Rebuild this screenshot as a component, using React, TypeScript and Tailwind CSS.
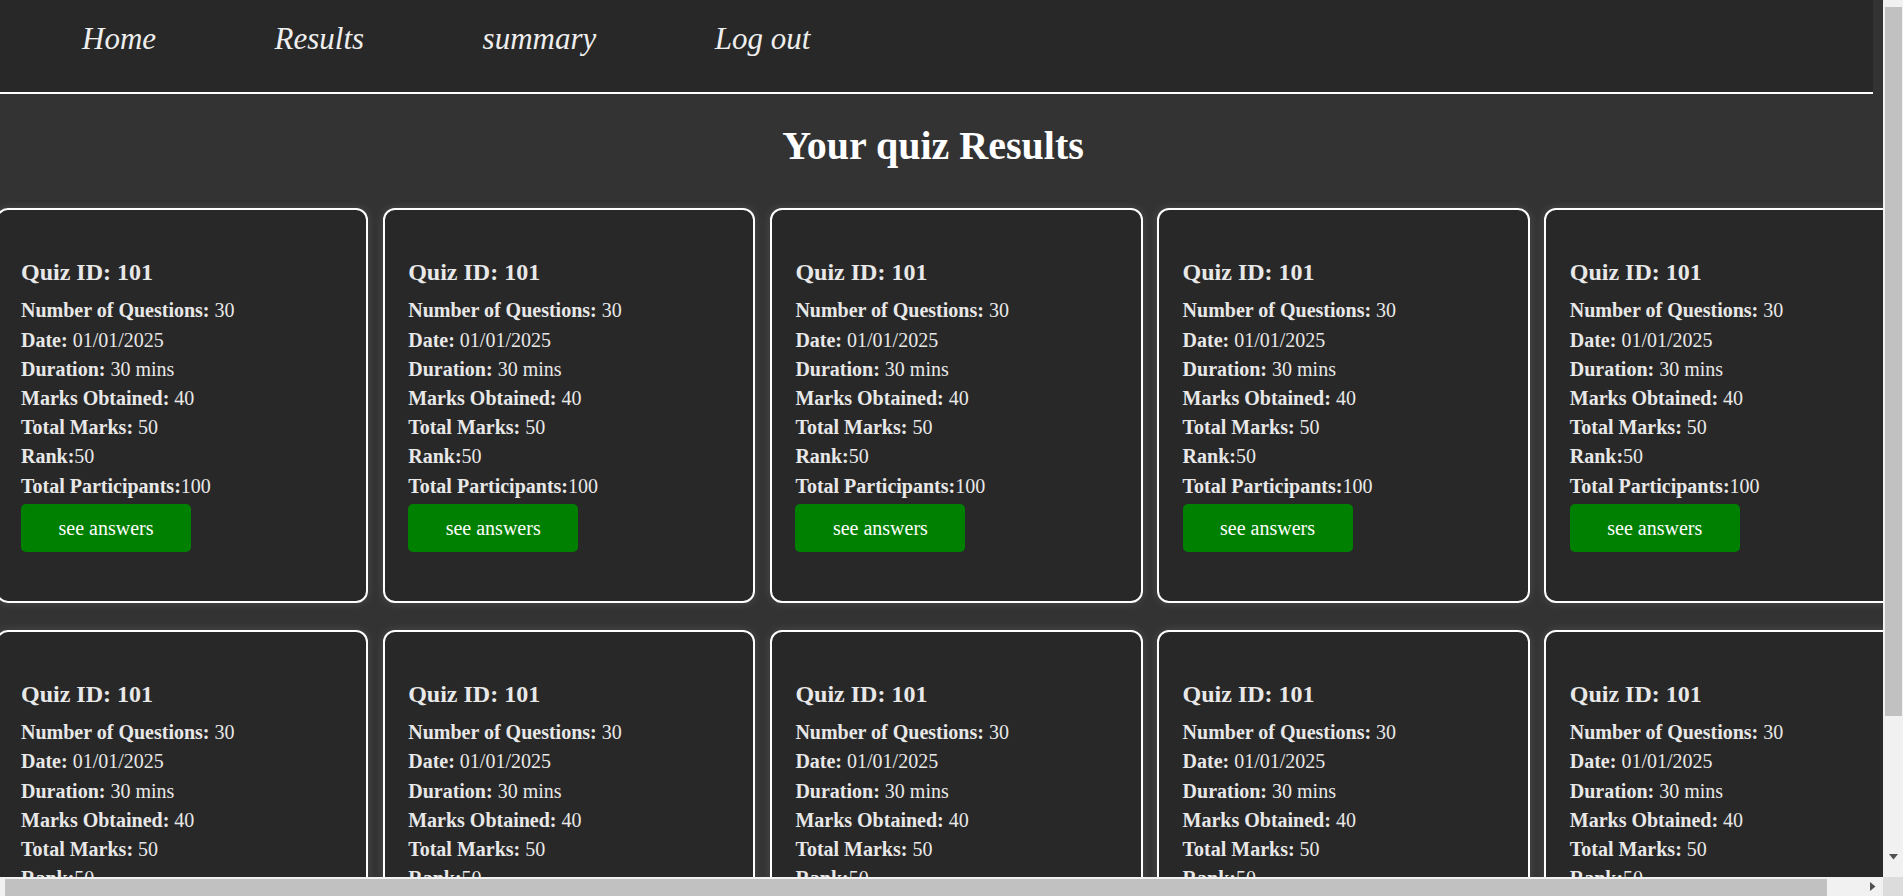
import React from "react";

const serif = { fontFamily: '"Liberation Serif", "Times New Roman", serif' };

function Card() {
  return (
    <div className="w-[372.8px] h-[394.4px] shrink-0 border-2 border-white rounded-[12px] bg-[#282828] pl-[23.5px] pr-4 flex flex-col justify-center text-[#e8e8e8] shadow-[0_0_10px_rgba(255,255,255,0.12)]">
      <h2 className="text-[24px] font-bold leading-[27.6px]">Quiz ID: 101</h2>
      <div className="mt-[10px] text-[20px] leading-[29.17px]">
        <div><b>Number of Questions:</b> 30</div>
        <div><b>Date:</b> 01/01/2025</div>
        <div><b>Duration:</b> 30 mins</div>
        <div><b>Marks Obtained:</b> 40</div>
        <div><b>Total Marks:</b> 50</div>
        <div><b>Rank:</b>50</div>
        <div><b>Total Participants:</b>100</div>
      </div>
      <button className="mt-[3.4px] w-[170px] h-[48px] rounded-[5px] bg-[#008000] text-white text-[20px] leading-none">
        see answers
      </button>
    </div>
  );
}

function Row() {
  return (
    <div className="flex gap-[14.4px] ml-[-4.5px]">
      <Card />
      <Card />
      <Card />
      <Card />
      <Card />
    </div>
  );
}

function Scrollbars() {
  return (
    <>
      {/* vertical scrollbar */}
      <div className="fixed top-0 right-0 w-[20px] h-[877px] bg-[#f1f1f1]">
        <div className="ml-[2px] mt-[7px] w-[17px] h-[709px] bg-[#c1c1c1]" />
        <svg className="ml-[6px] mt-[138px]" width="9" height="6" viewBox="0 0 9 6">
          <path d="M0 0 L9 0 L4.5 5.5 Z" fill="#505050" />
        </svg>
      </div>
      {/* horizontal scrollbar */}
      <div className="fixed bottom-0 left-0 w-[1883px] h-[19px] bg-[#f1f1f1] flex items-end">
        <div className="ml-[5px] w-[1822px] h-[17px] bg-[#c1c1c1]" />
        <svg className="ml-[43px] mb-[5px]" width="6" height="9" viewBox="0 0 6 9">
          <path d="M0 0 L0 9 L5.5 4.5 Z" fill="#505050" />
        </svg>
      </div>
      {/* corner */}
      <div className="fixed bottom-0 right-0 w-[20px] h-[19px] bg-[#dcdcdc]" />
    </>
  );
}

export default function App() {
  return (
    <div className="min-h-screen bg-[#333333] pb-[36px]" style={serif}>
      <header className="w-[1873px] h-[94px] bg-[#282828] border-b-2 border-white">
        <nav className="flex gap-[118.5px] pl-[82px] pt-[21px] text-[31px] italic leading-[35.6px] text-[#eeeeee]">
          <span>Home</span>
          <span>Results</span>
          <span>summary</span>
          <span>Log out</span>
        </nav>
      </header>
      <h1 className="w-[1866px] text-center text-[40px] font-bold leading-[46px] text-white mt-[28.5px] mb-[39.8px]">
        Your quiz Results
      </h1>
      <div className="flex flex-col gap-[27.3px]">
        <Row />
        <Row />
      </div>
      <Scrollbars />
    </div>
  );
}
